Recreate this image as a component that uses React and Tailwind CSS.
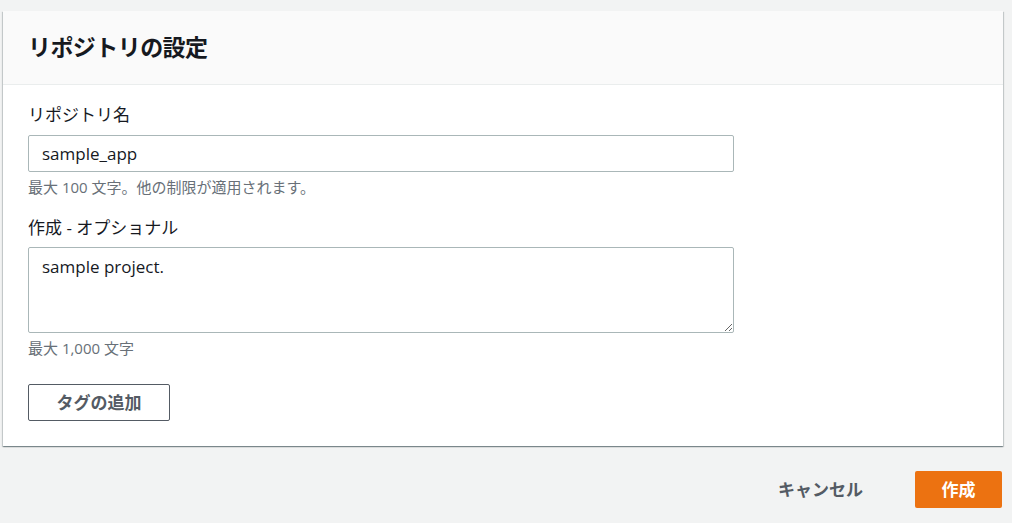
import React from "react";

export default function App() {
  return (
    <div className="min-h-[523px] bg-[#f2f3f3] pt-[11px] pl-[3px] pr-[9px] font-['Open_Sans','Noto_Sans_CJK_JP',sans-serif]">
      <div className="w-[1000px] bg-white shadow-[0_1px_1px_0_rgba(0,28,36,0.3),1px_1px_1px_0_rgba(0,28,36,0.15),-1px_1px_1px_0_rgba(0,28,36,0.15)]">
        <div className="h-[74px] bg-[#fafafa] border-b border-[#eaeded] px-[25px] flex items-center">
          <h2 className="text-[23px] font-bold text-[#16191f] tracking-tight">
            リポジトリの設定
          </h2>
        </div>

        <div className="px-[25px] pt-[17px] pb-[25px]">
          <label className="block text-[17px] leading-[26px] text-[#16191f]">リポジトリ名</label>
          <input
            readOnly
            value="sample_app"
            className="mt-[7px] w-[706px] h-[37px] border border-[#aab7b8] rounded-[2px] px-[13px] text-[17px] text-[#16191f] outline-none"
          />
          <p className="mt-[4px] text-[15px] leading-[22px] text-[#687078]">
            最大 100 文字。他の制限が適用されます。
          </p>

          <label className="block mt-[17px] text-[17px] leading-[26px] text-[#16191f]">
            作成 - オプショナル
          </label>
          <textarea
            readOnly
            value="sample project."
            className="mt-[6px] block w-[706px] h-[86px] border border-[#aab7b8] rounded-[2px] px-[13px] py-[6px] text-[17px] leading-[26px] text-[#16191f] outline-none resize-y"
          />
          <p className="mt-[4px] text-[15px] leading-[22px] text-[#687078]">最大 1,000 文字</p>

          <button className="mt-[25px] w-[142px] h-[37px] border border-[#545b64] rounded-[2px] bg-white text-[17px] font-bold text-[#545b64]">
            タグの追加
          </button>
        </div>
      </div>

      <div className="flex justify-end items-center gap-[52px] mt-[25px] pr-[1px]">
        <button className="text-[17px] font-bold text-[#545b64]">キャンセル</button>
        <button className="w-[87px] h-[37px] rounded-[2px] bg-[#ec7211] text-white text-[17px] font-bold">
          作成
        </button>
      </div>
    </div>
  );
}
